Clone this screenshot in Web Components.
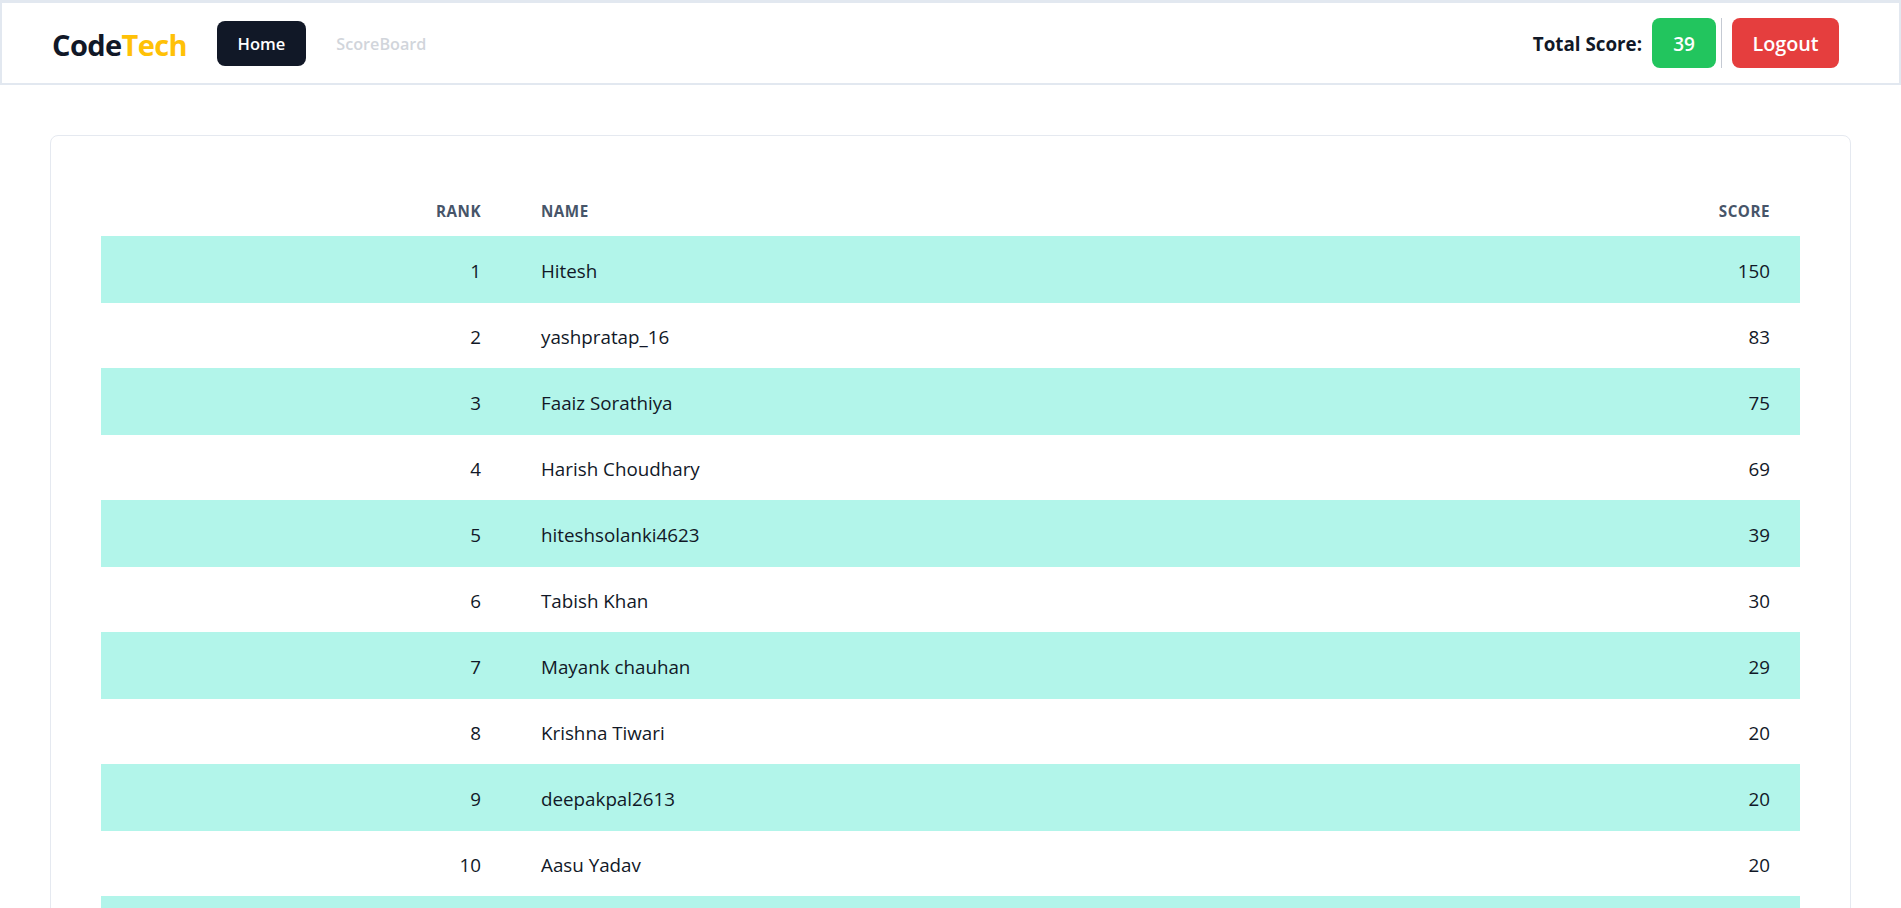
<!DOCTYPE html>
<html lang="en"><head><meta charset="utf-8"><title>CodeTech</title>
<style>
html,body{margin:0;height:100%;overflow:hidden;background:#fff}
body{font-family:"Open Sans","Noto Sans",sans-serif;color:#111827}
</style></head><body>
<site-nav score="39"></site-nav>
<main-area>
  <score-table>
    <score-row rank="1" name="Hitesh" score="150"></score-row>
    <score-row rank="2" name="yashpratap_16" score="83"></score-row>
    <score-row rank="3" name="Faaiz Sorathiya" score="75"></score-row>
    <score-row rank="4" name="Harish Choudhary" score="69"></score-row>
    <score-row rank="5" name="hiteshsolanki4623" score="39"></score-row>
    <score-row rank="6" name="Tabish Khan" score="30"></score-row>
    <score-row rank="7" name="Mayank chauhan" score="29"></score-row>
    <score-row rank="8" name="Krishna Tiwari" score="20"></score-row>
    <score-row rank="9" name="deepakpal2613" score="20"></score-row>
    <score-row rank="10" name="Aasu Yadav" score="20"></score-row>
    <score-row></score-row>
  </score-table>
</main-area>
<script>
function def(tag, css, html){
  customElements.define(tag, class extends HTMLElement{
    connectedCallback(){
      if(this.shadowRoot) return;
      const r=this.attachShadow({mode:'open'});
      const h=typeof html==='function'?html(this):html;
      r.innerHTML='<style>'+css+'</style>'+h;
    }
  });
}
def('nav-button',`
:host{display:inline-flex;align-items:center;justify-content:center;box-sizing:border-box;font-size:var(--fs,16.5px);font-weight:600;border-radius:8px;height:var(--h,45px);padding:var(--pt,0) var(--px,20.5px) 0;background:var(--bg,transparent);color:var(--fg,#fff);white-space:nowrap}
`,'<slot></slot>');
def('site-nav',`
:host{display:flex;align-items:center;box-sizing:border-box;height:85px;border:2px solid #e2e8f0;border-top-width:3px;padding:0 60px 0 50px;background:#fff}
.logo{font-size:29px;font-weight:700;letter-spacing:-.6px;color:#111827;margin-right:30px;line-height:1;padding-top:3px}
.logo span{color:#ffc107}
.links{display:flex;align-items:center;gap:10px}
.right{margin-left:auto;display:flex;align-items:center;height:50px}
.lbl{font-size:18.8px;font-weight:700;color:#111827;margin-right:10px;padding-top:2px}
.sep{width:1px;height:50px;background:#c5cad3;margin:0 10px 0 5px}
`,h=>`
<span class="logo">Code<span>Tech</span></span>
<div class="links">
  <nav-button style="--bg:#111827;--fg:#fff">Home</nav-button>
  <nav-button style="--fg:#d1d5db;--fs:16.2px;--pt:2px">ScoreBoard</nav-button>
</div>
<div class="right">
  <span class="lbl">Total Score:</span>
  <nav-button style="--bg:#22c55e;--h:50px;--px:0;--pt:2px;width:64px;--fs:19px">${h.getAttribute('score')}</nav-button>
  <span class="sep"></span>
  <nav-button style="--bg:#e53e3e;--h:50px;--px:0;width:107px;--fs:19.8px">Logout</nav-button>
</div>`);
def('main-area',`:host{display:block;padding:50px 50px 0 50px}`,'<slot></slot>');
def('score-table',`
:host{display:block;box-sizing:border-box;border:1px solid #e5e9f0;border-radius:8px;padding:48px 50px 0;background:#fff}
.head{display:grid;grid-template-columns:410px 1fr auto;height:52px;box-sizing:border-box;padding-top:2px;align-items:center;font-size:15.2px;font-weight:700;letter-spacing:.5px;color:#475569;text-transform:uppercase}
.head div{padding:0 30px 0 30px}
.head div:first-child{text-align:right}
`,`<div class="head"><div>Rank</div><div>Name</div><div>Score</div></div><slot></slot>`);
def('score-row',`
:host{display:grid;grid-template-columns:410px 1fr auto;height:65px;box-sizing:border-box;padding-top:3px;align-items:center;font-size:18.8px;color:#111827}
:host(:nth-of-type(odd)){background:#b2f5ea;height:67px}
div{padding:0 30px}
.rank{text-align:right}
`,h=>`<div class="rank">${h.getAttribute('rank')||''}</div><div>${h.getAttribute('name')||''}</div><div>${h.getAttribute('score')||''}</div>`);
</script>
</body></html>
